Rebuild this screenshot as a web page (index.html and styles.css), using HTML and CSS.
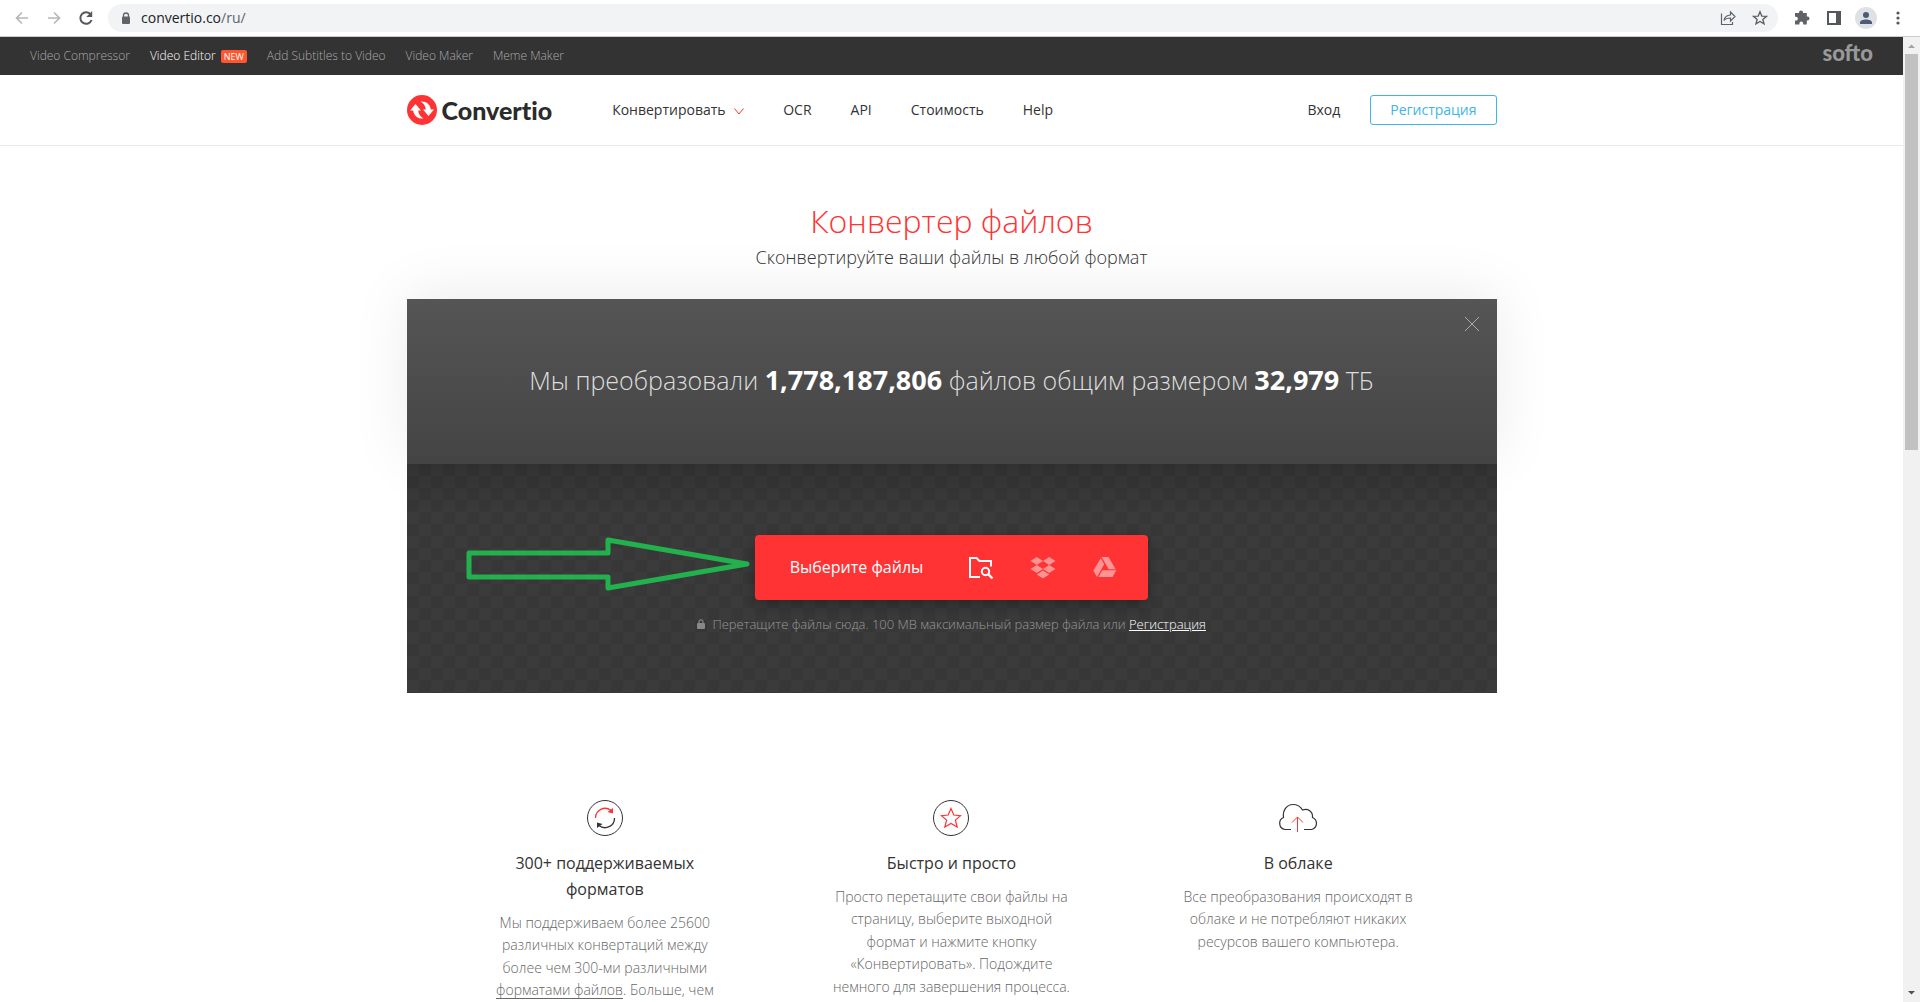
FILE: index.html
```html
<!DOCTYPE html>
<html lang="ru">

<head>
 <meta charset="UTF-8">
 <meta name="viewport" content="width=device-width, initial-scale=1.0">
 <title>Convertio — Конвертер файлов</title>
 <link rel="stylesheet" href="styles.css">
</head>

<body>

 <!-- Browser toolbar -->
 <div class="browser">
  <button class="browser-btn" type="button" aria-label="Back" disabled>
   <svg width="16" height="16" viewBox="0 0 16 16"><path d="M14 8H3M8 2.500L2.500 8L8 13.500" fill="none" stroke="#b4b6b9" stroke-width="1.600" /></svg>
  </button>
  <button class="browser-btn" type="button" aria-label="Forward" disabled>
   <svg width="16" height="16" viewBox="0 0 16 16"><path d="M2 8H13M8 2.500L13.500 8L8 13.500" fill="none" stroke="#b4b6b9" stroke-width="1.600" /></svg>
  </button>
  <button class="browser-btn" type="button" aria-label="Reload">
   <svg width="16" height="16" viewBox="0 0 16 16"><path d="M12.800 4.500A5.800 5.800 0 1 0 13.600 10" fill="none" stroke="#54575b" stroke-width="2" /><path d="M14.200 1V7H8.200Z" fill="#54575b" /></svg>
  </button>
  <div class="address">
   <svg width="10" height="13" viewBox="0 0 10 13"><path d="M2.500 5.500V3.500A2.500 2.500 0 0 1 7.500 3.500V5.500" fill="none" stroke="#5f6368" stroke-width="1.300" /><rect x="1" y="4.500" width="8" height="7.500" rx="1" fill="#5f6368" /></svg>
   <span class="address-url"><b>convertio.co</b>/ru/</span>
   <button class="browser-btn" type="button" aria-label="Share">
    <svg width="16" height="16" viewBox="0 0 16 16"><path d="M1.500 3.500V14.500H12.500V12M4 10.500C4.500 7 7 5.200 10.500 5V2L15 6.500L10.500 11V8C8 8 5.500 8.500 4 10.500Z" fill="none" stroke="#5f6368" stroke-width="1.200" /></svg>
   </button>
   <button class="browser-btn" type="button" aria-label="Bookmark">
    <svg width="16" height="16" viewBox="0 0 16 16"><path d="M8 1.800L9.800 6.100L14.400 6.400L10.900 9.400L12 13.900L8 11.500L4 13.900L5.100 9.400L1.600 6.400L6.200 6.100Z" fill="none" stroke="#5f6368" stroke-width="1.400" /></svg>
   </button>
  </div>
  <button class="browser-btn" type="button" aria-label="Extensions">
   <svg width="16" height="16" viewBox="0 0 16 16"><path d="M1 3H5V2.500A2 2 0 0 1 9 2.500V3H12.800V6.500H13.500A2 2 0 0 1 13.500 10.500H12.800V14.500H9.200V13.500A1.900 1.900 0 0 0 5.400 13.500V14.500H1V10.500H2A1.800 1.800 0 0 0 2 6.800H1Z" fill="#5f6368" /></svg>
  </button>
  <button class="browser-btn" type="button" aria-label="Side panel">
   <svg width="16" height="16" viewBox="0 0 16 16"><path d="M1 1H15V15H1ZM3 3V13H10V3Z" fill="#54575b" fill-rule="evenodd" /></svg>
  </button>
  <button class="browser-btn avatar" type="button" aria-label="Profile">
   <svg width="12" height="12" viewBox="0 0 12 12"><circle cx="6" cy="3" r="3" fill="#4d5b75" /><path d="M0 12V10.500C0 8.500 3 7.500 6 7.500S12 8.500 12 10.500V12Z" fill="#4d5b75" /></svg>
  </button>
  <button class="browser-btn" type="button" aria-label="Menu">
   <svg width="16" height="16" viewBox="0 0 16 16" fill="#54575b"><circle cx="8" cy="3" r="1.600" /><circle cx="8" cy="8" r="1.600" /><circle cx="8" cy="13" r="1.600" /></svg>
  </button>
 </div>

 <div class="window">
  <div class="page">

   <nav class="topbar">
    <a href="#">Video Compressor</a>
    <a class="active" href="#">Video Editor <span class="new">NEW</span></a>
    <a href="#">Add Subtitles to Video</a>
    <a href="#">Video Maker</a>
    <a href="#">Meme Maker</a>
    <a class="softo" href="#">softo</a>
   </nav>

   <header class="header">
    <div class="container header-row">
     <a class="logo" href="#">
      <svg width="30" height="30" viewBox="0 0 30 30"><circle cx="15" cy="15" r="15" fill="#f33" /><path d="M8.500 9L3 15.500H6.200C6.800 20.500 10.500 24 16.500 23.500C13.500 21.800 11.400 19 11.200 15.500H14Z" fill="#fff" /><path d="M21.500 21L27 14.500H23.800C23.200 9.500 19.500 6 13.500 6.500C16.500 8.200 18.600 11 18.800 14.500H16Z" fill="#fff" /></svg>
      <span>Convertio</span>
     </a>
     <nav class="menu">
      <a href="#">Конвертировать <svg width="10" height="7" viewBox="0 0 10 7"><path d="M0.500 0.500L5 6L9.500 0.500" fill="none" stroke="#f33" /></svg></a>
      <a href="#">OCR</a>
      <a href="#">API</a>
      <a href="#">Стоимость</a>
      <a href="#">Help</a>
     </nav>
     <a class="login" href="#">Вход</a>
     <a class="signup" href="#">Регистрация</a>
    </div>
   </header>

   <main class="container">
    <h1>Конвертер файлов</h1>
    <p class="subtitle">Сконвертируйте ваши файлы в любой формат</p>

    <section class="converter">
     <div class="banner">
      <button class="close" type="button" aria-label="Закрыть">
       <svg width="16" height="16" viewBox="0 0 16 16"><path d="M1 1L15 15M15 1L1 15" stroke="#aaa" /></svg>
      </button>
      <p>Мы преобразовали <b>1,778,187,806</b> файлов общим размером <b>32,979</b> ТБ</p>
     </div>
     <div class="dropzone">
      <svg class="arrow" width="288" height="56" viewBox="0 0 288 56"><path d="M3 17H142V4L281 28L142 52V41H3Z" fill="none" stroke="#22b14c" stroke-width="5" stroke-linejoin="round" /></svg>
      <div class="picker">
       <button class="picker-main" type="button">Выберите файлы</button>
       <button class="picker-icon" type="button" aria-label="С компьютера">
        <svg width="26" height="24" viewBox="0 0 26 24" fill="none" stroke="#fff" stroke-width="2"><path d="M12 21H2V2H8.500L11.500 5H23V10.500" /><circle cx="17.500" cy="15.500" r="3.700" /><path d="M20.200 18.200L24.500 22.500" stroke-width="2.400" /></svg>
       </button>
       <button class="picker-icon" type="button" aria-label="Dropbox">
        <svg width="26" height="24" viewBox="0 0 26 24" fill="#ff9494"><path d="M6.800 1L13 5L6.800 9L0.500 5ZM19.200 1L25.500 5L19.200 9L13 5ZM6.800 9L13 13L6.800 17L0.500 13ZM19.200 9L25.500 13L19.200 17L13 13ZM13 14.500L19.200 18.500L13 22.500L6.800 18.500Z" /></svg>
       </button>
       <button class="picker-icon" type="button" aria-label="Google Drive">
        <svg width="26" height="24" viewBox="0 0 26 24" fill="#ff9494"><path d="M9.500 1H16.500L23.700 13.200H16.700ZM8.700 2.300L12.200 8.300L5 21L1.300 14.700ZM10.300 14.300H24.300L20.500 21H6.400Z" /></svg>
       </button>
      </div>
      <p class="hint">
       <svg width="8" height="10" viewBox="0 0 8 10"><path d="M2 5V2.800A2 2 0 0 1 6 2.800V5" fill="none" stroke="#888" stroke-width="1.200" /><rect y="4" width="8" height="6" rx="1" fill="#888" /></svg>
       Перетащите файлы сюда. 100 MB максимальный размер файла или <a href="#">Регистрация</a>
      </p>
     </div>
    </section>

    <section class="features">
     <article class="feature">
      <svg width="42" height="36" viewBox="0 0 42 36" fill="none" stroke="#333"><circle cx="21" cy="18" r="17.500" /><path d="M11.500 18A9.500 9.500 0 0 1 27 10.500" stroke="#f33" stroke-width="1.300" /><path d="M29 8V13.500L23.500 12Z" fill="#f33" stroke="none" /><path d="M30.500 18A9.500 9.500 0 0 1 15 25.500" stroke-width="1.300" /><path d="M13 28V22.500L18.500 24Z" fill="#333" stroke="none" /></svg>
      <h2>300+ поддерживаемых форматов</h2>
      <p>Мы поддерживаем более 25600 различных конвертаций между более чем 300-ми различными <a href="#">форматами файлов</a>. Больше, чем</p>
     </article>
     <article class="feature">
      <svg width="42" height="36" viewBox="0 0 42 36" fill="none" stroke="#333"><circle cx="21" cy="18" r="17.500" /><path d="M21 8.500L23.800 15L30.500 15.600L25.400 20.100L27.200 27L21 23.500L14.800 27L16.600 20.100L11.500 15.600L18.200 15Z" stroke="#f33" stroke-width="1.200" /></svg>
      <h2>Быстро и просто</h2>
      <p>Просто перетащите свои файлы на страницу, выберите выходной формат и нажмите кнопку «Конвертировать». Подождите немного для завершения процесса.</p>
     </article>
     <article class="feature">
      <svg width="42" height="36" viewBox="0 0 42 36" fill="none" stroke="#333"><path d="M14 29.500H8A6.300 6.300 0 0 1 6.500 17.500C5.500 10 10 4.500 16 4.500C20.500 4.500 23.500 6.500 25.500 10C31 8 36 11.500 35.500 17.500A6.300 6.300 0 0 1 34.500 29.500H27" stroke-width="1.200" /><path d="M20.500 32V17M15 22.500L20.500 17L26 22.500" stroke="#f33" /></svg>
      <h2>В облаке</h2>
      <p>Все преобразования происходят в облаке и не потребляют никаких ресурсов вашего компьютера.</p>
     </article>
    </section>
   </main>

  </div>

  <div class="scrollbar">
   <svg width="17" height="17" viewBox="0 0 17 17"><path d="M5 11L8.500 7.500L12 11Z" fill="#a3a3a3" /></svg>
   <div class="thumb"></div>
   <svg class="down" width="17" height="17" viewBox="0 0 17 17"><path d="M5 6L8.500 9.500L12 6Z" fill="#505050" /></svg>
  </div>
 </div>

</body>

</html>
```
FILE: styles.css
```css
:root {
 --main-font: "Open Sans", "Noto Sans", sans-serif;
 --red: #f33;
 --blue: #3eb5e8;
 --dark: #333;
}

*,
*::before,
*::after {
 box-sizing: border-box;
}

body {
 display: flex;
 flex-direction: column;
 height: 100vh;
 margin: 0;
 overflow: hidden;
 background: #fff;
 color: var(--dark);
 font-family: var(--main-font);
 font-size: 14px;
}

a {
 color: inherit;
 text-decoration: none;
}

button {
 padding: 0;
 border: 0;
 background: none;
 color: inherit;
 font: inherit;
}

h1,
h2,
p {
 margin: 0;
}

svg {
 flex: none;
}

/* - - - - Browser - - - - */
.browser {
 display: flex;
 align-items: center;
 flex: none;
 gap: 16px;
 height: 37px;
 padding: 0 14px;
 border-bottom: 1px solid #ccc;
}

.browser-btn {
 display: flex;
 align-items: center;
 justify-content: center;
 width: 16px;
 height: 16px;
}

.address {
 display: flex;
 align-items: center;
 flex: 1;
 gap: 16px;
 height: 28px;
 margin-left: -2px;
 padding: 0 10px 0 13px;
 border-radius: 14px;
 background: #f1f3f4;
}

.address-url {
 flex: 1;
 margin-left: -6px;
 padding-bottom: 2px;
 color: #5f6368;
 font-size: 14px;
}

.address-url b {
 color: #202124;
 font-weight: 400;
}

.avatar {
 width: 22px;
 height: 22px;
 margin: 0 -3px;
 border-radius: 50%;
 background: #dee1e6;
}

.window {
 display: flex;
 flex: 1;
 min-height: 0;
}

.page {
 flex: 1;
 overflow: hidden;
}

.scrollbar {
 display: flex;
 flex-direction: column;
 width: 17px;
 background: #f1f1f1;
}

.thumb {
 height: 41%;
 margin: 0 2px;
 background: #c1c1c1;
}

.down {
 margin-top: auto;
}

/* - - - - Header - - - - */
.topbar {
 display: flex;
 align-items: center;
 gap: 20px;
 height: 38px;
 padding: 0 30px 2px;
 background: var(--dark);
 color: #aaa;
 font-size: 12px;
 font-weight: 300;
}

.topbar .active {
 color: #fff;
}

.new {
 margin-left: 2px;
 padding: 0 3px;
 border-radius: 2px;
 background: #ff5630;
 font-size: 9px;
 font-weight: 400;
}

.topbar .softo {
 margin-left: auto;
 padding-bottom: 4px;
 color: #999;
 font-family: Lato, sans-serif;
 font-size: 22px;
 font-weight: 900;
 line-height: 1;
}

.container {
 max-width: 1090px;
 margin: 0 auto;
}

.header {
 border-bottom: 1px solid #e9e9e9;
}

.header-row {
 display: flex;
 align-items: center;
 height: 70px;
}

.logo {
 display: flex;
 align-items: center;
 gap: 5px;
 margin-right: 60px;
 color: #2b2b2b;
 font-family: Lato, sans-serif;
 font-size: 25px;
 font-variant-ligatures: none;
 font-weight: 900;
}

.menu {
 display: flex;
 flex: 1;
 gap: 39px;
 padding-bottom: 2px;
}

.menu svg {
 margin-left: 5px;
}

.login {
 margin-right: 30px;
 padding-bottom: 2px;
}

.signup {
 padding: 4px 19px;
 border: 1px solid var(--blue);
 border-radius: 3px;
 color: var(--blue);
 line-height: 20px;
}

/* - - - - Converter - - - - */
h1 {
 padding-top: 51px;
 color: var(--red);
 font-size: 32px;
 font-weight: 300;
 line-height: 48px;
 text-align: center;
}

.subtitle {
 font-size: 18px;
 font-weight: 300;
 line-height: 24px;
 text-align: center;
}

.converter {
 margin-top: 30px;
}

.banner {
 position: relative;
 padding: 61px 20px 64px;
 background: linear-gradient(#555, #444);
 box-shadow: 0 -6px 60px rgba(0, 0, 0, 0.08);
 color: #ddd;
 font-size: 25px;
 font-weight: 300;
 line-height: 40px;
 text-align: center;
}

.banner b {
 color: #fff;
 font-size: 27px;
 font-weight: 700;
}

.close {
 display: flex;
 position: absolute;
 top: 17px;
 right: 17px;
}

.dropzone {
 display: flex;
 flex-direction: column;
 align-items: center;
 gap: 12px;
 position: relative;
 padding: 71px 20px 57px;
 background:
  linear-gradient(rgba(0, 0, 0, 0.15), transparent 50px),
  repeating-conic-gradient(#373737 0 25%, #3b3b3b 0 50%) 0 0 / 24px 24px;
}

.arrow {
 position: absolute;
 top: 72px;
 left: 59px;
}

.picker {
 display: flex;
 align-items: center;
 gap: 36px;
 height: 65px;
 padding: 0 30px 0 35px;
 border-radius: 4px;
 background: var(--red);
 box-shadow: 0 5px 15px rgba(0, 0, 0, 0.3);
 color: #fff;
}

.picker-main {
 margin-right: 9px;
 padding-bottom: 2px;
 font-size: 16px;
}

.picker-icon {
 display: flex;
}

.hint {
 color: #999;
 font-size: 13px;
 font-weight: 300;
 line-height: 24px;
}

.hint svg {
 margin-right: 4px;
}

.hint a {
 color: #fff;
 text-decoration: underline;
}

/* - - - - Features - - - - */
.features {
 display: grid;
 grid-template-columns: repeat(3, 1fr);
 gap: 100px;
 margin-top: 107px;
 padding: 0 75px;
}

.feature {
 text-align: center;
}

.feature svg {
 display: block;
 margin: 0 auto 14px;
}

.feature h2 {
 margin-bottom: 10px;
 font-size: 16px;
 font-weight: 400;
 line-height: 26px;
}

.feature p {
 color: #666;
 font-size: 14px;
 font-weight: 300;
 line-height: 1.6;
}

.feature a {
 text-decoration: underline;
 text-underline-offset: 3px;
}
```
